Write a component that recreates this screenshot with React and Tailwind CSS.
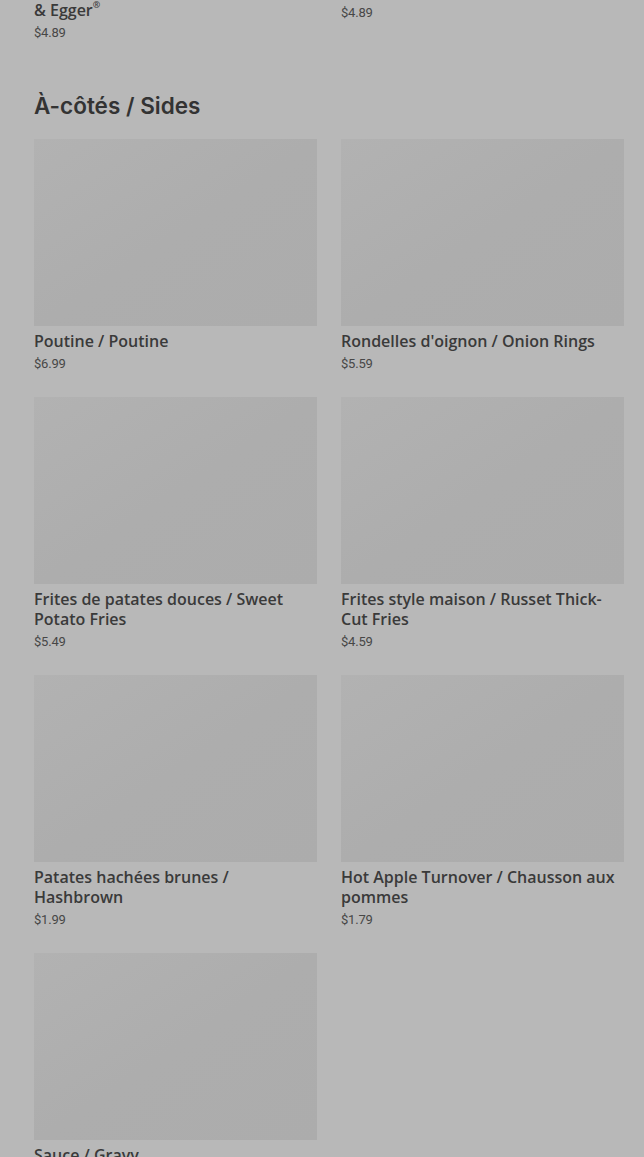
const prevItems = [
  { name: 'Muffin saucisse / Sausage', tail: '& Egger', price: '$4.89' },
  { name: 'Bacon & Egger / Bacon & Egger', price: '$4.89' },
];

const sides = [
  { name: 'Poutine / Poutine', price: '$6.99' },
  { name: "Rondelles d'oignon / Onion Rings", price: '$5.59' },
  { name: 'Frites de patates douces / Sweet Potato Fries', price: '$5.49' },
  { name: 'Frites style maison / Russet Thick-Cut Fries', price: '$4.59' },
  { name: 'Patates hachées brunes / Hashbrown', price: '$1.99' },
  { name: 'Hot Apple Turnover / Chausson aux pommes', price: '$1.79' },
  { name: 'Sauce / Gravy', price: '$2.19' },
];

const MenuCard = ({ item }) => (
  <div className="flex flex-col">
    <div className="h-[187px] w-full bg-gradient-to-br from-[#b2b2b2] via-[#adadad] to-[#acacac]" />
    <h3 className="mt-[5px] text-[16px] leading-[20px] font-semibold text-[#3a3a3a] [font-family:'Open_Sans',Roboto,sans-serif]">
      {item.name}
      {item.tail && (
        <>
          <br />
          {item.tail}
          <span className="align-top text-[9px] leading-none">®</span>
        </>
      )}
    </h3>
    <p className="mt-[3px] text-[13px] leading-[20px] text-[#474747] tracking-[-0.2px] [font-family:Roboto,'Liberation_Sans',sans-serif]">
      {item.price}
    </p>
  </div>
);

export default function App() {
  return (
    <div className="h-[1157px] w-full overflow-hidden bg-[#b8b8b8]">
      <div className="pl-[34px] pr-[20px] -mt-[212px]">
        {/* tail of previous section */}
        <div className="grid grid-cols-2 gap-x-[24px] items-start">
          {prevItems.map((item, i) => (
            <MenuCard key={i} item={item} />
          ))}
        </div>

        <section className="mt-[48px]">
          <h2 className="text-[22.5px] leading-[30px] font-semibold text-[#333333] [font-family:Inter,'Liberation_Sans',sans-serif]">
            À-côtés / Sides
          </h2>
          <div className="mt-[18px] grid grid-cols-2 gap-x-[24px] gap-y-[23px] items-start">
            {sides.map((item, i) => (
              <MenuCard key={i} item={item} />
            ))}
          </div>
        </section>
      </div>
    </div>
  );
}
